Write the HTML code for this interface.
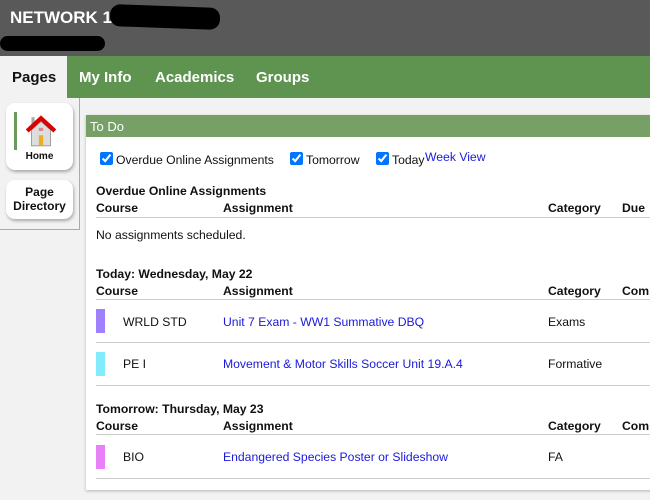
<!DOCTYPE html><html><head><style>
*{margin:0;padding:0;box-sizing:border-box}
body{width:650px;height:500px;overflow:hidden;background:#f2f2f2;font-family:"Liberation Sans",sans-serif;position:relative;font-size:12.2px;color:#111}
.a{position:absolute}
.hd{left:0;top:0;width:650px;height:56px;background:#595959}
.nav{left:0;top:56px;width:650px;height:42px;background:#5e9450}
.nav span{position:absolute;top:13px;font-size:15px;font-weight:bold;color:#fff}
.side{left:0;top:98px;width:80px;height:132px;border-right:1px solid #aaa;border-bottom:1px solid #aaa;background:#f2f2f2}
.card{position:absolute;left:6px;width:67px;background:#fff;border-radius:9px;box-shadow:1px 2px 3px rgba(0,0,0,.3);text-align:center;font-weight:bold}
.panel{left:86px;top:115px;width:570px;height:375px;background:#fff;box-shadow:0 1px 3px rgba(0,0,0,.25)}
.ph{left:86px;top:115px;width:564px;height:22px;background:#76a065;color:#fff;font-size:13px;padding:4px 4px}
.b{font-weight:bold}
.ln{position:absolute;left:96px;width:560px;height:1px;background:#ccc}
.lk{color:#1a1adb}
.bar{position:absolute;left:96px;width:9px;height:24px}
input{position:absolute;width:13px;height:13px;margin:0}
</style></head><body>
<div class="a hd"></div>
<div class="a" style="left:10px;top:8px;color:#fff;font-weight:bold;font-size:17px">NETWORK 1</div>
<div class="a" style="left:110px;top:6px;width:110px;height:22px;background:#000;border-radius:10px;transform:rotate(2deg)"></div>
<div class="a" style="left:0;top:36px;width:105px;height:15px;background:#000;border-radius:8px"></div>
<div class="a nav"><div class="a" style="left:0;top:0;width:67px;height:42px;background:#f2f2f2"></div>
<span style="left:12px;color:#111">Pages</span><span style="left:79px">My Info</span><span style="left:155px">Academics</span><span style="left:256px">Groups</span></div>
<div class="a side">
<div class="card" style="top:5px;height:67px;font-size:10px">
<div class="a" style="left:8px;top:9px;width:3px;height:38px;background:#6a9a5a"></div>
<svg class="a" style="left:19px;top:11px" width="32" height="34" viewBox="0 0 30 32"><rect x="6" y="3" width="3" height="9" fill="#aaa"/><polygon points="6,15 15,7 24,15 24,30 6,30" fill="#ddd" stroke="#888" stroke-width=".7"/><polyline points="2,16 15,4 28,16" fill="none" stroke="#d00" stroke-width="4"/><rect x="13" y="20" width="4" height="10" fill="#e8b020"/><rect x="13" y="13" width="4" height="3" fill="#d88"/></svg>
<div class="a" style="left:0;width:67px;top:48px">Home</div></div>
<div class="card" style="top:82px;height:39px;font-size:12px;padding-top:5px;line-height:14px">Page<br>Directory</div>
</div>
<div class="a panel"></div>
<div class="a ph">To Do</div>
<input type="checkbox" checked style="left:100px;top:152px"><div class="a" style="left:116px;top:153px">Overdue Online Assignments</div>
<input type="checkbox" checked style="left:290px;top:152px"><div class="a" style="left:306px;top:153px">Tomorrow</div>
<input type="checkbox" checked style="left:376px;top:152px"><div class="a" style="left:392px;top:153px">Today</div>
<div class="a lk" style="left:425px;top:150px">Week View</div>
<div class="a b" style="left:96px;top:184px">Overdue Online Assignments</div>
<div class="a b" style="left:96px;top:201px">Course</div><div class="a b" style="left:223px;top:201px">Assignment</div><div class="a b" style="left:548px;top:201px">Category</div><div class="a b" style="left:622px;top:201px">Due</div>
<div class="ln" style="top:217px"></div>
<div class="a" style="left:96px;top:228px">No assignments scheduled.</div>
<div class="a b" style="left:96px;top:267px">Today: Wednesday, May 22</div>
<div class="a b" style="left:96px;top:284px">Course</div><div class="a b" style="left:223px;top:284px">Assignment</div><div class="a b" style="left:548px;top:284px">Category</div><div class="a b" style="left:622px;top:284px">Comp</div>
<div class="ln" style="top:299px"></div>
<div class="bar" style="top:309px;background:#a080ff"></div><div class="a" style="left:123px;top:315px">WRLD STD</div><div class="a lk" style="left:223px;top:315px">Unit 7 Exam - WW1 Summative DBQ</div><div class="a" style="left:548px;top:315px">Exams</div>
<div class="ln" style="top:342px"></div>
<div class="bar" style="top:352px;background:#80ecfc"></div><div class="a" style="left:123px;top:357px">PE I</div><div class="a lk" style="left:223px;top:357px">Movement &amp; Motor Skills Soccer Unit 19.A.4</div><div class="a" style="left:548px;top:357px">Formative</div>
<div class="ln" style="top:385px"></div>
<div class="a b" style="left:96px;top:402px">Tomorrow: Thursday, May 23</div>
<div class="a b" style="left:96px;top:419px">Course</div><div class="a b" style="left:223px;top:419px">Assignment</div><div class="a b" style="left:548px;top:419px">Category</div><div class="a b" style="left:622px;top:419px">Comp</div>
<div class="ln" style="top:434px"></div>
<div class="bar" style="top:445px;background:#e880f8"></div><div class="a" style="left:123px;top:450px">BIO</div><div class="a lk" style="left:223px;top:450px">Endangered Species Poster or Slideshow</div><div class="a" style="left:548px;top:450px">FA</div>
<div class="ln" style="top:478px"></div>
</body></html>
